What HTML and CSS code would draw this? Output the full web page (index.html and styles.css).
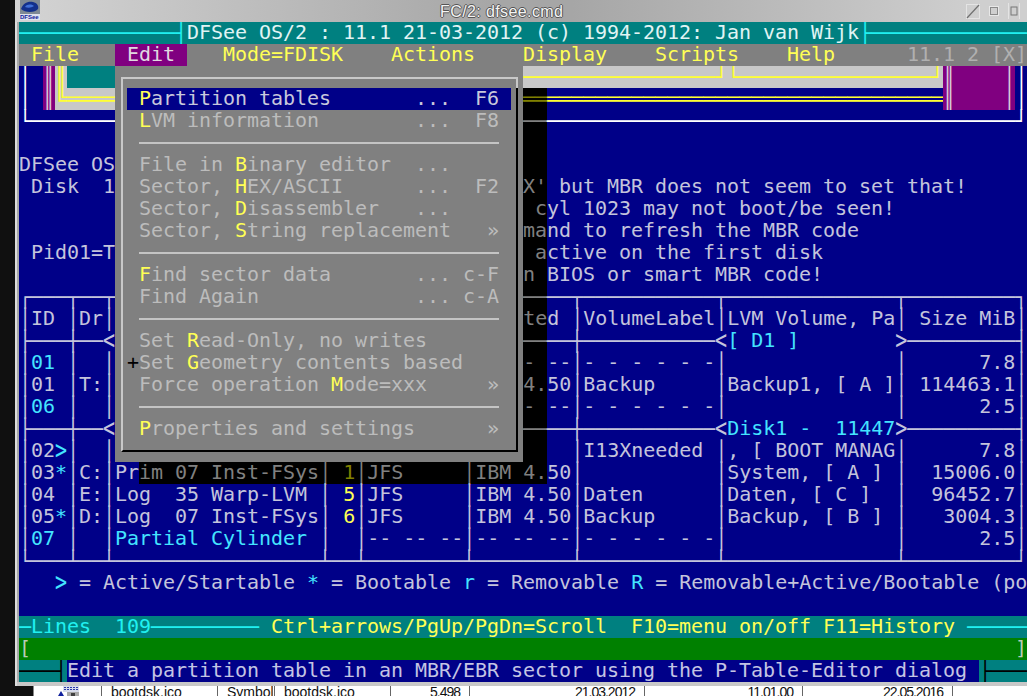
FILE: index.html
```html
<!DOCTYPE html>
<html lang="en">
<head>
<meta charset="utf-8">
<title>FC/2: dfsee.cmd</title>
<link rel="stylesheet" href="styles.css">
</head>
<body>
<div class="desk">
  <div class="win">
    <div class="titlebar">
      <div class="appicon">
        <svg class="appicon-art" viewBox="0 0 20 14" width="20" height="14"><rect width="20" height="14" fill="#7f8a94"/><path d="M1 9 C3 3 8 1 13 2 C17 3 19 6 18 9 C15 13 5 13 1 9Z" fill="#12308c"/><path d="M5 7 C7 4 11 4 14 6 C11 8 8 8 5 7Z" fill="#3f70d8"/></svg>
        <span class="appicon-label">DFSee</span>
      </div>
      <div class="wintitle">FC/2: dfsee.cmd</div>
      <div class="winbtns">
        <svg width="14" height="15" viewBox="0 0 14 15"><rect x="0.5" y="0.5" width="13" height="14" fill="none" stroke="#e4e4e4"/><path d="M1 14 L13 1" stroke="#707070" stroke-width="1.2"/></svg>
        <svg width="12" height="12" viewBox="0 0 12 12"><rect x="1.5" y="1.5" width="9" height="9" fill="none" stroke="#e8e8e8"/><rect x="2.5" y="2.5" width="7" height="7" fill="none" stroke="#8a8a8a"/></svg>
        <svg width="12" height="18" viewBox="0 0 12 18"><path d="M0.5 1 V17 M11.5 1 V17" stroke="#e4e4e4"/><rect x="3" y="5" width="6" height="8" fill="none" stroke="#777"/></svg>
      </div>
    </div>
    <div class="term">
<div class="r clip on-teal"><b class="tc">─────────────┤</b><span class="tw">DFSee OS/2 : 11.1 21-03-2012 (c) 1994-2012: Jan van Wijk</span><b class="tc">├─────────────</b></div>
<div class="r clip on-gray"><span class="y"> File   </span><span class="hi-purple"> Edit </span><span class="y">   Mode=FDISK    Actions    Display    Scripts    Help</span><span class="ver">      11.1 2 [X]</span></div>
<div class="r clip"><b class="wh">│</b> <b class="bg-p l">║</b><b class="bg-l y2">║</b><span class="bg-t">    </span>                                  <b class="bg-l y2">────────────────┘└────────────────┘</b><b class="bg-p l">║    │</b><b class="wh">│</b></div>
<div class="r clip"><b class="wh">│</b> <b class="bg-p l">║</b><b class="bg-l y2">╚════</b>                                  <b class="sh-y">══</b><b class="y2">═════════════════════════════════</b><b class="bg-p l">║    │</b><b class="wh">│</b></div>
<div class="r wh"><b>└─────────────────────────────────────────</b><b class="sh">──</b><b>───────────────────────────────────────┘</b></div>
<div class="r">                                          <span class="sh">  </span></div>
<div class="r">DFSee OS                                  <span class="sh">  </span></div>
<div class="r"> Disk  1                                  <span class="sh">X'</span> but MBR does not seem to set that!</div>
<div class="r">                                          <span class="sh"> c</span>yl 1023 may not boot/be seen!</div>
<div class="r">                                          <span class="sh">ma</span>nd to refresh the MBR code</div>
<div class="r"> Pid01=T                                  <span class="sh"> a</span>ctive on the first disk</div>
<div class="r">                                          <span class="sh">n </span>BIOS or smart MBR code!</div>
<div class="r"><b>┌───┬──┬</b>                                  <b class="sh">──</b><b>──┬───────────┬──────────────┬─────────┐</b></div>
<div class="r"><b>│</b>ID <b>│</b>Dr<b>│</b>                                  <span class="sh">te</span>d <b>│</b>VolumeLabel<b>│</b>LVM Volume, Pa<b>│</b> Size MiB<b>│</b></div>
<div class="r"><b>├───┼──</b><i>&lt;</i>                                  <b class="sh">──</b><b>──┼───────────</b><i>&lt;</i><span class="c">[ D1 ]</span>        <i>&gt;</i><b>─────────┤</b></div>
<div class="r"><b>│</b><span class="c">01</span> <b>│</b>  <b>│</b>                                  <span class="sh">- </span>--<b>│</b>- - - - - -<b>│</b>              <b>│</b>      7.8<b>│</b></div>
<div class="r"><b>│</b>01 <b>│</b>T:<b>│</b>                                  <span class="sh">4.</span>50<b>│</b>Backup     <b>│</b>Backup1, [ A ]<b>│</b> 114463.1<b>│</b></div>
<div class="r"><b>│</b><span class="c">06</span> <b>│</b>  <b>│</b>                                  <span class="sh">- </span>--<b>│</b>- - - - - -<b>│</b>              <b>│</b>      2.5<b>│</b></div>
<div class="r"><b>├───┼──</b><i>&lt;</i>                                  <b class="sh">──</b><b>──┼───────────</b><i>&lt;</i><span class="c">Disk1 -  11447</span><i>&gt;</i><b>─────────┤</b></div>
<div class="r"><b>│</b>02<i class="c">&gt;</i><b>│</b>  <b>│</b>                                  <span class="sh">  </span>  <b>│</b>I13Xneeded <b>│</b>, [ BOOT MANAG<b>│</b>      7.8<b>│</b></div>
<div class="r"><b>│</b>03<span class="c">*</span><b>│</b>C:<b>│</b>Pr<span class="sh">im 07 Inst-FSys<b>│</b> <span class="sh-y">1</span><b>│</b>JFS     <b>│</b>IBM 4.</span>50<b>│</b>           <b>│</b>System, [ A ] <b>│</b>  15006.0<b>│</b></div>
<div class="r"><b>│</b>04 <b>│</b>E:<b>│</b>Log  35 Warp-LVM <b>│</b> <span class="y">5</span><b>│</b>JFS     <b>│</b>IBM 4.50<b>│</b>Daten      <b>│</b>Daten, [ C ]  <b>│</b>  96452.7<b>│</b></div>
<div class="r"><b>│</b>05<span class="c">*</span><b>│</b>D:<b>│</b>Log  07 Inst-FSys<b>│</b> <span class="y">6</span><b>│</b>JFS     <b>│</b>IBM 4.50<b>│</b>Backup     <b>│</b>Backup, [ B ] <b>│</b>   3004.3<b>│</b></div>
<div class="r"><b>│</b><span class="c">07</span> <b>│</b>  <b>│</b><span class="c">Partial Cylinder</span> <b>│</b>  <b>│</b>-- -- --<b>│</b>-- -- --<b>│</b>- - - - - -<b>│</b>              <b>│</b>      2.5<b>│</b></div>
<div class="r"><b>└───┴──┴─────────────────┴──┴────────┴────────┴───────────┴──────────────┴─────────┘</b></div>
<div class="r">   <i class="c">&gt;</i> = Active/Startable <span class="c">*</span> = Bootable <span class="c">r</span> = Removable <span class="c">R</span> = Removable+Active/Bootable (po</div>
<div class="r"></div>
<div class="r clip on-teal"><b class="tc">─</b><span class="tc">Lines  109</span><b class="tc">─────────</b> <span class="y">Ctrl+arrows/PgUp/PgDn=Scroll  F10=menu on/off F11=History</span> <b class="tc">─────</b></div>
<div class="r clip on-green">[                                                                                  ]</div>
<div class="r clip on-teal"><b class="k">───┤</b><span class="bg-b">Edit a partition table in an MBR/EBR sector using the P-Table-Editor dialog </span><b class="k">├───</b></div>
      <div class="menu">
        <div class="menu-frame">
          <div class="mi sel"> <span class="y">P</span>artition tables       ...  F6</div>
          <div class="mi"> <span class="y">L</span>VM information        ...  F8</div>
          <div class="ms"></div>
          <div class="mi"> File in <span class="y">B</span>inary editor  ...</div>
          <div class="mi"> Sector, <span class="y">H</span>EX/ASCII      ...  F2</div>
          <div class="mi"> Sector, <span class="y">D</span>isassembler   ...</div>
          <div class="mi"> Sector, <span class="y">S</span>tring replacement   »</div>
          <div class="ms"></div>
          <div class="mi"> <span class="y">F</span>ind sector data       ... c-F</div>
          <div class="mi"> Find Again             ... c-A</div>
          <div class="ms"></div>
          <div class="mi"> Set <span class="y">R</span>ead-Only, no writes</div>
          <div class="mi"><span class="k">+</span>Set <span class="y">G</span>eometry contents based</div>
          <div class="mi"> Force operation <span class="y">M</span>ode=xxx     »</div>
          <div class="ms"></div>
          <div class="mi"> <span class="y">P</span>roperties and settings      »</div>
        </div>
      </div>
    </div>
    <div class="winfoot"></div>
  </div>
  <div class="files">
    <div class="fcell ficon">
      <svg width="24" height="10" viewBox="0 0 24 10"><rect x="5" y="0" width="16" height="6" fill="#d8dcec"/><path d="M6 1.5 H20 M6 3.5 H20" stroke="#2a3ca8" stroke-dasharray="2 1"/><rect x="9" y="6" width="12" height="4" fill="#a8a8a8"/><rect x="13" y="7" width="4" height="3" fill="#404040"/><path d="M0 10 L3 5 L6 10Z" fill="#10209c"/></svg>
    </div>
    <div class="fcell">bootdsk.ico</div>
    <div class="fcell fcell-double">Symbol</div>
    <div class="fcell">bootdsk.ico</div>
    <div class="fcell num">5.498</div>
    <div class="fcell num">21.03.2012</div>
    <div class="fcell num">11.01.00</div>
    <div class="fcell num">22.05.2016</div>
  </div>
</div>
</body>
</html>
```
FILE: styles.css
```css
* { box-sizing: border-box; }
html, body { margin: 0; padding: 0; }
body { width: 1027px; height: 696px; overflow: hidden; background: #101010; }
.desk { display: flex; flex-direction: column; height: 696px; overflow: hidden; }

.win { margin-left: 15px; width: 1012px; padding-left: 2px; border-left: 2px solid #dcdcdc; background: #a8a8a8; flex: none; }
.titlebar { display: flex; align-items: flex-start; height: 22px; margin-left: -4px; padding-left: 4px; background: linear-gradient(90deg, #d4d4d4 0%, #a6a6a6 48%, #a6a6a6 55%, #cfcfcf 95%); }
.appicon { width: 20px; margin-left: 1px; display: flex; flex-direction: column; flex: none; }
.appicon-art { display: block; }
.appicon-label { display: block; height: 6px; background: #dfe3ee; color: #10209c; font: bold 6px/6px "Liberation Sans", sans-serif; overflow: hidden; }
.wintitle { margin-left: 400px; padding-top: 2px; font: 16px/20px "Liberation Sans", sans-serif; color: #f4f4f4; text-shadow: -1px 0 #555, 1px 0 #555, 0 -1px #555, 0 1px #555; letter-spacing: 0.4px; white-space: nowrap; }
.winbtns { margin-left: auto; display: flex; align-items: center; gap: 8px; height: 22px; padding-right: 7px; }

.term { position: relative; width: 1008px; overflow: hidden; background: #000088; font-family: "DejaVu Sans Mono", "Liberation Mono", monospace; font-size: 20px; letter-spacing: -0.04px; color: #c4c4dc; }
.r { height: 22px; line-height: 20px; white-space: pre; }
.clip { overflow: hidden; }
.r b { font-weight: normal; vertical-align: -1px; }
.r i { font-style: normal; display: inline-block; transform: scaleY(1.3); }
.on-teal { background: #008080; color: #d8f0f0; }
.on-gray { background: #808080; }
.on-green { background: #008000; color: #b8ccb8; }

.y { color: #ffff55; }
.y2 { color: #ffff33; }
.c { color: #44e4ff; }
.tc { color: #20f0f0; }
.tw { color: #e0f4f4; }
.wh { color: #ffffff; }
.k { color: #000000; }
.l { color: #d8c8d8; }
.ver { color: #b0b0b0; }
.hi-purple, .bg-p, .bg-l, .bg-t, .bg-b { padding-bottom: 3px; }
.hi-purple { background: #800080; color: #e0d8e0; }
.bg-p { background: #800080; }
.bg-l { background: #c8c8c8; }
.bg-t { background: #008080; }
.bg-b { background: #000088; color: #c4c4e4; }
.sh { background: #000; color: #808080; }
.sh-y { background: #000; color: #808000; }

.menu { position: absolute; left: 96px; top: 44px; width: 408px; height: 396px; padding: 11px 5px 10px 6px; background: #808080; color: #bcbcbc; }
.menu-frame { position: relative; height: 375px; padding: 9px 0 0 4px; border: 2px solid; border-color: #c8c8c8 #000 #000 #c8c8c8; }
.menu-frame::before { content: ""; position: absolute; right: -2px; top: -2px; width: 2px; height: 11px; background: #c8c8c8; }
.mi { width: 384px; height: 22px; line-height: 20px; white-space: pre; }
.mi.sel { background: #000088; color: #c8c8dc; }
.ms { width: 360px; height: 2px; margin: 10px 12px; background: #c4c4c4; }

.winfoot { height: 4px; margin-left: -2px; background: #c8c8c8; }
.files { display: grid; grid-template-columns: 68px 116px 57px 116px 79px 175px 158px 150px 74px; margin-left: 33px; flex: 1; background: #fff; border-left: 1px solid #888; overflow: hidden; font: 14px/12px "Liberation Sans", sans-serif; color: #111; white-space: nowrap; }
.fcell { padding: 0 9px; border-right: 1px solid #666; overflow: hidden; }
.fcell-double { border-right: 3px double #666; padding-right: 0; }
.ficon { padding: 0 0 0 24px; }
.ficon svg { display: block; }
.num { text-align: right; letter-spacing: -1px; }
```
